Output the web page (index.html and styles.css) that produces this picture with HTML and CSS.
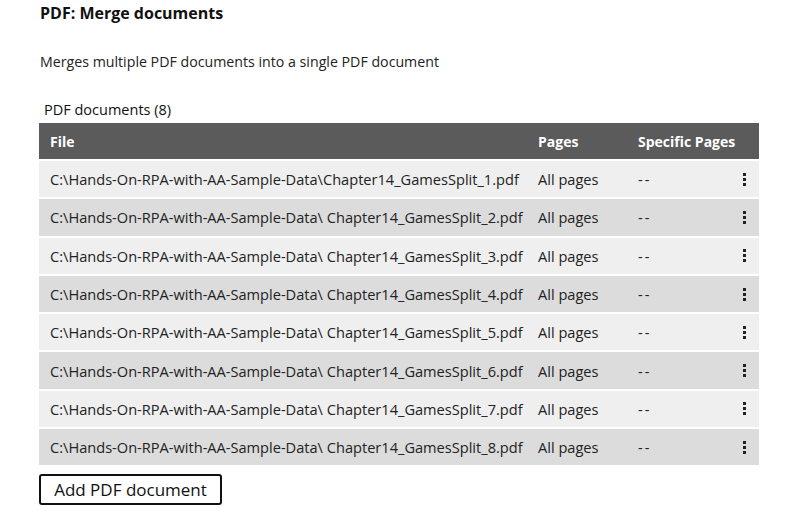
FILE: index.html
```html
<!DOCTYPE html>
<html>
<head>
<meta charset="utf-8">
<link rel="stylesheet" href="styles.css">
</head>
<body>
<div class="page">
  <h1 class="title">PDF: Merge documents</h1>
  <p class="desc">Merges multiple PDF documents into a single PDF document</p>
  <div class="label">PDF documents (8)</div>
  <div class="table">
    <div class="row head">
      <div class="c-file">File</div>
      <div class="c-pages">Pages</div>
      <div class="c-spec">Specific Pages</div>
      <div class="c-menu"></div>
    </div>
    <div class="row odd">
      <div class="c-file">C:\Hands-On-RPA-with-AA-Sample-Data\Chapter14_GamesSplit_1.pdf</div>
      <div class="c-pages">All pages</div>
      <div class="c-spec">--</div>
      <div class="c-menu"><span class="dots"><i></i><i></i><i></i></span></div>
    </div>
    <div class="row even">
      <div class="c-file">C:\Hands-On-RPA-with-AA-Sample-Data\ Chapter14_GamesSplit_2.pdf</div>
      <div class="c-pages">All pages</div>
      <div class="c-spec">--</div>
      <div class="c-menu"><span class="dots"><i></i><i></i><i></i></span></div>
    </div>
    <div class="row odd">
      <div class="c-file">C:\Hands-On-RPA-with-AA-Sample-Data\ Chapter14_GamesSplit_3.pdf</div>
      <div class="c-pages">All pages</div>
      <div class="c-spec">--</div>
      <div class="c-menu"><span class="dots"><i></i><i></i><i></i></span></div>
    </div>
    <div class="row even">
      <div class="c-file">C:\Hands-On-RPA-with-AA-Sample-Data\ Chapter14_GamesSplit_4.pdf</div>
      <div class="c-pages">All pages</div>
      <div class="c-spec">--</div>
      <div class="c-menu"><span class="dots"><i></i><i></i><i></i></span></div>
    </div>
    <div class="row odd">
      <div class="c-file">C:\Hands-On-RPA-with-AA-Sample-Data\ Chapter14_GamesSplit_5.pdf</div>
      <div class="c-pages">All pages</div>
      <div class="c-spec">--</div>
      <div class="c-menu"><span class="dots"><i></i><i></i><i></i></span></div>
    </div>
    <div class="row even">
      <div class="c-file">C:\Hands-On-RPA-with-AA-Sample-Data\ Chapter14_GamesSplit_6.pdf</div>
      <div class="c-pages">All pages</div>
      <div class="c-spec">--</div>
      <div class="c-menu"><span class="dots"><i></i><i></i><i></i></span></div>
    </div>
    <div class="row odd">
      <div class="c-file">C:\Hands-On-RPA-with-AA-Sample-Data\ Chapter14_GamesSplit_7.pdf</div>
      <div class="c-pages">All pages</div>
      <div class="c-spec">--</div>
      <div class="c-menu"><span class="dots"><i></i><i></i><i></i></span></div>
    </div>
    <div class="row even">
      <div class="c-file">C:\Hands-On-RPA-with-AA-Sample-Data\ Chapter14_GamesSplit_8.pdf</div>
      <div class="c-pages">All pages</div>
      <div class="c-spec">--</div>
      <div class="c-menu"><span class="dots"><i></i><i></i><i></i></span></div>
    </div>
  </div>
  <button class="add">Add PDF document</button>
</div>
</body>
</html>
```
FILE: styles.css
```css
* { box-sizing: border-box; }
html, body { margin: 0; padding: 0; background: #fff; }
body {
  font-family: "Open Sans", "Noto Sans", sans-serif;
  color: #222;
}
.page {
  padding: 2px 29px 0 39px;
  width: 788px;
}
.title {
  margin: 0 0 0 1px;
  font-size: 16px;
  font-weight: 700;
  line-height: 22px;
  color: #111;
}
.desc {
  margin: 28px 0 0 1px;
  font-size: 14.2px;
  line-height: 20px;
  color: #222;
}
.label {
  margin: 29px 0 4px 5px;
  font-size: 14.5px;
  line-height: 18px;
  color: #111;
}
.table {
  width: 720px;
  display: flex;
  flex-direction: column;
  gap: 2px;
}
.row {
  display: grid;
  grid-template-columns: 499px 100px 1fr 30px;
  align-items: center;
  height: 36.3px;
  font-size: 14.6px;
  color: #222;
}
.row > div:first-child { padding-left: 11px; white-space: nowrap; }
.head {
  background: #5b5b5b;
  color: #fff;
  font-weight: 700;
  font-size: 14px;
  height: 36px;
}
.odd { background: #efefef; }
.even { background: #dcdcdc; }
.c-pages, .c-spec { white-space: nowrap; }
.c-spec { letter-spacing: 2px; }
.head .c-spec { letter-spacing: 0; }
.c-menu { display: flex; justify-content: center; }
.dots { display: flex; flex-direction: column; gap: 2px; }
.dots i { display: block; width: 3px; height: 3px; background: #222; }
.add {
  margin-top: 9px;
  margin-left: 0;
  height: 31px;
  width: 183px;
  padding: 0;
  font-family: "Open Sans", "Noto Sans", sans-serif;
  font-size: 17px;
  color: #111;
  background: #fff;
  border: 2px solid #111;
  border-radius: 3px;
}
```
